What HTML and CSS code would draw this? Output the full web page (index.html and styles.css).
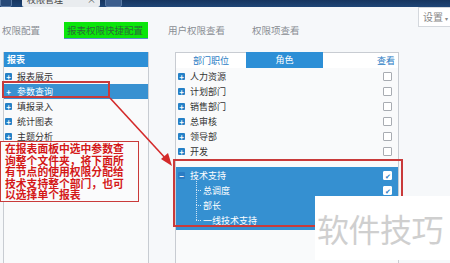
FILE: index.html
```html
<!DOCTYPE html>
<html lang="zh-CN">
<head>
    <meta charset="UTF-8">
    <title>报表权限快捷配置</title>
    <link rel="stylesheet" href="styles.css">
</head>
<body>
    <div class="topbar">
        <span class="tb-btn"></span>
        <span class="tb-tab">权限管理<i>×</i></span>
        <span class="tb-btn tb-btn-2"></span>
    </div>

    <div class="nav">
        <span class="nav-item">权限配置</span>
        <span class="nav-item active">报表权限快捷配置</span>
        <span class="nav-item wide">用户权限查看</span>
        <span class="nav-item">权限项查看</span>
        <span class="settings">设置 <small>▾</small></span>
    </div>

    <div class="main">
        <!-- 报表面板 -->
        <div class="panel-left">
            <div class="panel-head">报表</div>
            <ul class="tree">
                <li><span class="ico">+</span>报表展示</li>
                <li class="sel"><span class="ico">+</span>参数查询</li>
                <li><span class="ico">+</span>填报录入</li>
                <li><span class="ico">+</span>统计图表</li>
                <li><span class="ico">+</span>主题分析</li>
            </ul>
        </div>

        <!-- 部门职位面板 -->
        <div class="panel-right">
            <div class="tabs">
                <span class="tab on">部门职位</span>
                <span class="tab blue">角色</span>
                <span class="tab view">查看</span>
            </div>
            <ul class="tree dept">
                <li><span class="ico">+</span>人力资源<span class="cb"></span></li>
                <li><span class="ico">+</span>计划部门<span class="cb"></span></li>
                <li><span class="ico">+</span>销售部门<span class="cb"></span></li>
                <li><span class="ico">+</span>总审核<span class="cb"></span></li>
                <li><span class="ico">+</span>领导部<span class="cb"></span></li>
                <li><span class="ico">+</span>开发<span class="cb"></span></li>
            </ul>
            <ul class="tree dept group">
                <li><span class="ico minus">−</span>技术支持<span class="cb on">✔</span></li>
                <li class="child">总调度<span class="cb on">✔</span></li>
                <li class="child">部长</li>
                <li class="child last">一线技术支持</li>
            </ul>
        </div>
    </div>

    <!-- 标注 -->
    <div class="mark mark-row"></div>
    <div class="mark mark-group"></div>
    <div class="note">在报表面板中选中参数查<br>询整个文件夹，将下面所<br>有节点的使用权限分配给<br>技术支持整个部门，也可<br>以选择单个报表</div>
    <svg class="arrow" width="450" height="263" viewBox="0 0 450 263">
        <line x1="110" y1="98" x2="167" y2="160" stroke="#d42a2a" stroke-width="1.6"/>
        <polygon points="172,166 161,159 168,153" fill="#d42a2a"/>
    </svg>
    <div class="watermark">软件技巧</div>
</body>
</html>
```
FILE: styles.css
```css
* {
    box-sizing: border-box;
}
body {
    margin: 0;
    width: 450px;
    height: 263px;
    overflow: hidden;
    background: #f6f8fa;
    font-family: "Noto Sans CJK SC", "Noto Sans", sans-serif;
    color: #333;
}
ul {
    list-style: none;
    margin: 0;
    padding: 0;
}

/* 顶部栏 */
.topbar {
    height: 7px;
    background: linear-gradient(#17355f, #1f4677);
    display: flex;
    align-items: flex-end;
    overflow: hidden;
}
.tb-btn {
    width: 12px;
    height: 10px;
    background: #284a78;
    border: 1px solid #5a7aa4;
    border-radius: 2px;
}
.tb-btn-2 {
    width: 17px;
    margin-left: 5px;
    background: #3b5d8c;
}
.tb-tab {
    width: 78px;
    height: 12px;
    margin-left: 10px;
    background: #e9ecef;
    border-radius: 2px;
    font-size: 9px;
    line-height: 9px;
    padding-left: 5px;
    display: flex;
    justify-content: space-between;
    color: #444;
}
.tb-tab i {
    font-style: normal;
    padding-right: 4px;
}

/* 导航 */
.nav {
    height: 45px;
    display: flex;
    align-items: flex-start;
    padding-left: 2px;
}
.nav-item {
    font-size: 9.5px;
    color: #8a8e94;
    margin-top: 15px;
    height: 17px;
    line-height: 16px;
    margin-right: 24px;
}
.nav-item.active {
    background: #0be60b;
    color: #2a6a3a;
    padding: 0 5px 0 3px;
    border-bottom: 1px solid #5a8ad0;
    margin-right: 20px;
}
.nav-item.wide {
    margin-right: 27px;
}
.settings {
    margin-left: auto;
    font-size: 10px;
    color: #888;
    background: #fff;
    border: 1px solid #d4d8dd;
    border-right: 0;
    height: 20px;
    line-height: 18px;
    width: 32px;
    padding-left: 4px;
}
.settings small {
    font-size: 6px;
}

/* 主区域 */
.main {
    display: flex;
    padding-left: 3px;
    height: 211px;
}
.panel-left {
    width: 146px;
    border-left: 1px solid #c8ccd2;
    border-right: 1px solid #c8ccd2;
    background: #f9fafb;
}
.panel-head {
    height: 15px;
    background: #2d8fd6;
    color: #fff;
    font-size: 9px;
    font-weight: bold;
    line-height: 15px;
    padding-left: 3px;
}
.tree {
    padding-top: 2px;
}
.tree li {
    height: 15px;
    display: flex;
    align-items: center;
    font-size: 9px;
    color: #333;
    padding-left: 1px;
}
.tree li.sel {
    background: #3891d1;
    color: #fff;
}
.ico {
    width: 7px;
    height: 7px;
    background: #2580c6;
    color: #fff;
    font-size: 8px;
    line-height: 7px;
    text-align: center;
    font-weight: bold;
    margin-right: 5px;
    border-radius: 1px;
}
.sel .ico {
    background: transparent;
}

.panel-right {
    width: 224px;
    margin-left: 26px;
    border-left: 1px solid #c8ccd2;
    border-right: 1px solid #c8ccd2;
    background: #f9fafb;
}
.tabs {
    display: flex;
    height: 16px;
}
.tab {
    font-size: 9px;
    line-height: 15px;
    text-align: center;
}
.tab.on {
    width: 70px;
    background: #fff;
    color: #2a7cc4;
    border-top: 1px solid #c8ccd2;
}
.tab.blue {
    width: 77px;
    background: #2d8fd6;
    color: #fff;
}
.tab.view {
    flex: 1;
    background: #fff;
    color: #2a7cc4;
    text-align: right;
    padding-right: 3px;
    border-top: 1px solid #c8ccd2;
}
.dept {
    padding-top: 1px;
}
.dept li {
    padding-left: 2px;
}
.cb {
    width: 9px;
    height: 9px;
    border: 1px solid #a8acb2;
    background: #fff;
    margin-left: auto;
    margin-right: 6px;
    border-radius: 1px;
    font-size: 7px;
    line-height: 8px;
    text-align: center;
    color: #2a7cc4;
}
.cb.on {
    border-color: #fff;
}
.group {
    background: #3590d1;
    margin-top: 8px;
    padding: 1px 0 2px;
    height: 63px;
}
.group li {
    color: #fff;
}
.group .ico {
    background: #2a7cc4;
}
.group .child {
    padding-left: 27px;
    position: relative;
}
.group .child::before {
    content: "";
    position: absolute;
    left: 20px;
    top: -8px;
    height: 15px;
    border-left: 1px dotted #d0e4f4;
}
.group .child::after {
    content: "";
    position: absolute;
    left: 20px;
    top: 7px;
    width: 5px;
    border-top: 1px dotted #d0e4f4;
}

/* 标注 */
.mark {
    position: absolute;
    border: 2px solid #c93a3a;
}
.mark-row {
    left: 2px;
    top: 81px;
    width: 108px;
    height: 17px;
}
.mark-group {
    left: 173px;
    top: 159px;
    width: 230px;
    height: 68px;
}
.note {
    position: absolute;
    left: 0;
    top: 141px;
    width: 139px;
    height: 61px;
    padding: 1px 3px 0 4px;
    background: #fafbfc;
    border: 1px solid #c93a3a;
    color: #d41818;
    font-family: "Noto Sans CJK SC", sans-serif;
    font-weight: bold;
    font-size: 10.8px;
    line-height: 11.6px;
    white-space: nowrap;
}
.arrow {
    position: absolute;
    left: 0;
    top: 0;
}
.watermark {
    position: absolute;
    left: 315px;
    top: 196px;
    width: 135px;
    height: 64px;
    background: #fff;
    color: #cfcfcf;
    font-size: 32px;
    line-height: 64px;
    padding-left: 2px;
    letter-spacing: -0.5px;
    white-space: nowrap;
}
```
